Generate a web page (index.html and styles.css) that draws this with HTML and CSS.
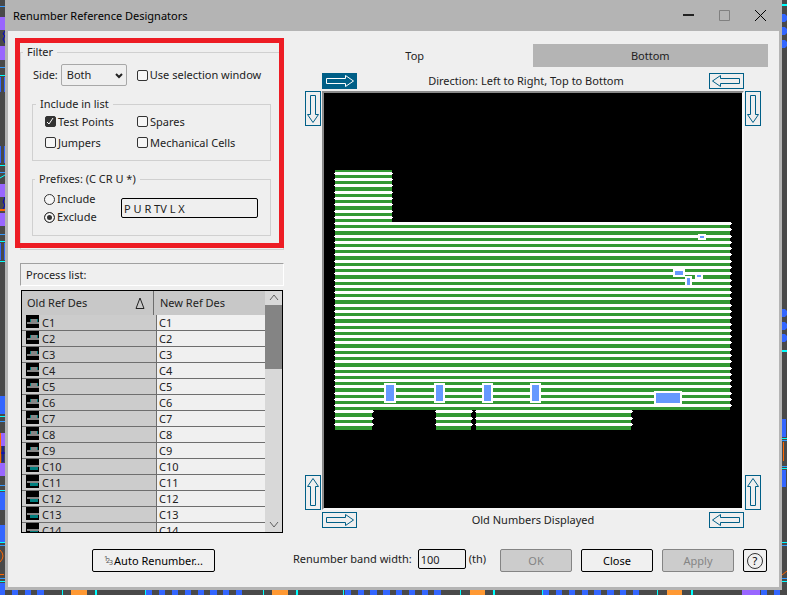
FILE: index.html
```html
<!DOCTYPE html>
<html lang="en">
<head>
  <meta charset="UTF-8">
  <meta name="viewport" content="width=device-width, initial-scale=1.0">
  <title>Renumber Reference Designators</title>
  <link rel="stylesheet" href="styles.css">
</head>
<body>
  <!-- Shared icons -->
  <svg class="defs" width="0" height="0" aria-hidden="true">
    <symbol id="arrow-right" viewBox="0 0 33 14">
      <path d="M3.5 4.5H22.5V1.5L30.5 7L22.5 12.5V9.5H3.5Z" fill="none" stroke="currentColor"/>
    </symbol>
    <symbol id="arrow-left" viewBox="0 0 33 14">
      <path d="M29.5 4.5H10.5V1.5L2.5 7L10.5 12.5V9.5H29.5Z" fill="none" stroke="currentColor"/>
    </symbol>
    <symbol id="arrow-down" viewBox="0 0 14 33">
      <path d="M4.5 3.5V22.5H1.5L7 30.5L12.5 22.5H9.5V3.5Z" fill="none" stroke="currentColor"/>
    </symbol>
    <symbol id="arrow-up" viewBox="0 0 14 33">
      <path d="M4.5 29.5V10.5H1.5L7 2.5L12.5 10.5H9.5V29.5Z" fill="none" stroke="currentColor"/>
    </symbol>
    <symbol id="part-top" viewBox="0 0 13 13">
      <rect width="13" height="13" fill="#000"/>
      <path d="M4 4h8v3h-8z" fill="#008080"/>
      <path d="M5 4h6v3h-6zM1 7h12v2H1z" fill="#868686"/>
    </symbol>
    <symbol id="part-bottom" viewBox="0 0 13 13">
      <rect width="13" height="13" fill="#000"/>
      <path d="M1 6h12v2H1z" fill="#868686"/>
      <path d="M4 8h8v3h-8z" fill="#008080"/>
    </symbol>
  </svg>

  <!-- Layout editor showing behind the dialog -->
  <svg class="backdrop" width="787" height="595" aria-hidden="true">
    <path fill="#9966ff" d="M0 17h5v13H0zM0 46h5v14H0zM0 184h5v13H0zM0 213h5v13H0zM0 433h5v13H0zM0 463h5v13H0zM742 590h18v5h-18z"/>
    <path fill="#3366ff" d="M0 77h1v15H0zM4 77h1v15H4zM0 146h1v17H0zM4 146h1v17H4zM0 243h1v17H0zM4 243h1v17H4zM0 396h5v18H0zM0 492h5v18H0zM0 525h5v17H0zM0 583h5v12H0z"/>
    <path fill="#3366ff" d="M782 14h3l2 2v4l-2 2h-3zM782 27h3l2 2v4l-2 2h-3zM782 40h3l2 2v4l-2 2h-3zM782 309h3l2 2v4l-2 2h-3zM782 322h3l2 2v4l-2 2h-3zM782 334h3l2 2v4l-2 2h-3zM782 419h4v18h-4zM782 470h4v17h-4z"/>
    <path fill="#3366ff" d="M12 590h6v5h-6zM25 590h6v5h-6zM37 590h7v5h-7zM146 590h6v5h-6zM159 590h6v5h-6zM172 590h6v5h-6zM185 590h6v5h-6zM198 590h6v5h-6zM210 590h7v5h-7zM223 590h6v5h-6zM236 590h6v5h-6zM345 590h6v5h-6zM358 590h6v5h-6zM370 590h7v5h-7zM383 590h7v5h-7zM396 590h6v5h-6zM409 590h6v5h-6zM422 590h6v5h-6zM434 590h7v5h-7zM543 590h6v5h-6zM556 590h6v5h-6zM569 590h6v5h-6zM582 590h6v5h-6zM594 590h7v5h-7zM607 590h7v5h-7zM620 590h6v5h-6zM633 590h6v5h-6zM761 590h6v5h-6zM774 590h6v5h-6z"/>
    <path fill="#3399ff" d="M0 6h5v1H0zM0 67h5v1H0zM0 172h5v1H0zM0 234h5v1H0zM0 421h5v1H0zM0 485h5v1H0zM0 545h5v1H0zM0 578h5v1H0zM782 440h5v1h-5zM782 466h5v1h-5zM782 545h5v1h-5zM782 578h5v1h-5z"/>
    <path fill="#00ffff" d="M0 75h5v1H0zM0 165h5v1H0zM0 241h5v1H0zM0 261h5v1H0zM0 416h5v1H0zM0 490h5v1H0zM0 542h5v1H0zM0 581h5v1H0zM782 4h5v2h-5zM782 350h5v2h-5zM782 438h5v1h-5zM782 468h5v1h-5zM782 542h5v1h-5zM782 581h5v1h-5zM62 590h1v5h-1zM95 590h2v5h-2zM145 590h1v5h-1zM263 590h1v5h-1zM296 590h2v5h-2zM343 590h1v5h-1zM460 590h1v5h-1zM493 590h2v5h-2zM542 590h1v5h-1zM657 590h1v5h-1zM691 590h2v5h-2z"/>
    <path fill="#ff9933" d="M71 590h16v5H71zM272 590h16v5h-16zM470 590h15v5h-15zM667 590h15v5h-15z"/>
    <path fill="#ff6600" d="M0 209h5v2H0zM0 433h1v30H0zM0 574h4v1H0zM783 442h1v19h-1z"/>
    <path fill="none" stroke="#ff6600" d="M0 550q6 6 0 12M782 575l5-4"/>
    <path fill="none" stroke="#0000cc" d="M5 31l-2 3 2 2-2 3 2 4M5 197l-2 5 2 3-2 4M1 453h4M3 446v16"/>
    <path fill="none" stroke="#00ffff" d="M0 178l5-3"/>
  </svg>

  <main class="dialog">
    <header class="titlebar">
      <h1 class="title">Renumber Reference Designators</h1>
      <div class="window-buttons">
        <button type="button" aria-label="Minimize">
          <svg width="12" height="12"><path d="M0 5h11" stroke="#222" stroke-width="2"/></svg>
        </button>
        <button type="button" aria-label="Maximize" disabled>
          <svg width="12" height="12"><path d="M.5 .5h10v10h-10z" fill="none" stroke="#808080"/></svg>
        </button>
        <button type="button" aria-label="Close window">
          <svg width="12" height="12"><path d="M0 0l11 11M11 0L0 11" stroke="#000"/></svg>
        </button>
      </div>
    </header>

    <div class="content">
      <section class="left">
        <fieldset class="group filter">
          <legend>Filter</legend>
          <div class="side-row">
            <label for="side">Side:</label>
            <div class="select">
              <select id="side">
                <option>Both</option>
                <option>Top</option>
                <option>Bottom</option>
              </select>
              <svg width="8" height="6" aria-hidden="true"><path d="M1 1l3 3 3-3" fill="none" stroke="#222" stroke-width="2"/></svg>
            </div>
            <label class="check"><input type="checkbox">Use selection window</label>
          </div>

          <fieldset class="group include">
            <legend>Include in list</legend>
            <div class="include-grid">
              <label class="check"><input type="checkbox" checked>Test Points</label>
              <label class="check"><input type="checkbox">Spares</label>
              <label class="check"><input type="checkbox">Jumpers</label>
              <label class="check"><input type="checkbox">Mechanical Cells</label>
            </div>
          </fieldset>

          <fieldset class="group prefixes">
            <legend>Prefixes: (C CR U *)</legend>
            <div class="prefix-row">
              <div class="radios">
                <label class="check"><input type="radio" name="prefix">Include</label>
                <label class="check"><input type="radio" name="prefix" checked>Exclude</label>
              </div>
              <input class="textbox prefix-input" type="text" value="P U R TV L X" aria-label="Prefixes">
            </div>
          </fieldset>
        </fieldset>

        <h2 class="process-title">Process list:</h2>
        <div class="list">
          <div class="list-view">
            <table>
              <thead>
                <tr>
                  <th class="old">Old Ref Des
                    <svg class="sort" width="10" height="12" aria-hidden="true"><path d="M5 1L1 11.5H9Z" fill="none" stroke="#222"/></svg>
                  </th>
                  <th>New Ref Des</th>
                </tr>
              </thead>
              <tbody>
                <tr><td><svg><use href="#part-top"/></svg>C1</td><td>C1</td></tr>
                <tr><td><svg><use href="#part-top"/></svg>C2</td><td>C2</td></tr>
                <tr><td><svg><use href="#part-top"/></svg>C3</td><td>C3</td></tr>
                <tr><td><svg><use href="#part-top"/></svg>C4</td><td>C4</td></tr>
                <tr><td><svg><use href="#part-top"/></svg>C5</td><td>C5</td></tr>
                <tr><td><svg><use href="#part-top"/></svg>C6</td><td>C6</td></tr>
                <tr><td><svg><use href="#part-top"/></svg>C7</td><td>C7</td></tr>
                <tr><td><svg><use href="#part-top"/></svg>C8</td><td>C8</td></tr>
                <tr><td><svg><use href="#part-top"/></svg>C9</td><td>C9</td></tr>
                <tr><td><svg><use href="#part-bottom"/></svg>C10</td><td>C10</td></tr>
                <tr><td><svg><use href="#part-bottom"/></svg>C11</td><td>C11</td></tr>
                <tr><td><svg><use href="#part-bottom"/></svg>C12</td><td>C12</td></tr>
                <tr><td><svg><use href="#part-bottom"/></svg>C13</td><td>C13</td></tr>
                <tr><td><svg><use href="#part-bottom"/></svg>C14</td><td>C14</td></tr>
              </tbody>
            </table>
          </div>
          <div class="scrollbar" aria-hidden="true">
            <svg width="10" height="14"><path d="M1 9l4-5 4 5" fill="none" stroke="#606060"/></svg>
            <div class="thumb"></div>
            <svg class="scroll-down" width="10" height="14"><path d="M1 4l4 5 4-5" fill="none" stroke="#606060"/></svg>
          </div>
        </div>
      </section>

      <section class="right">
        <div class="tabs" role="tablist">
          <button class="tab active" type="button" role="tab" aria-selected="true">Top</button>
          <button class="tab" type="button" role="tab" aria-selected="false">Bottom</button>
        </div>

        <div class="stage">
          <div class="stage-row">
            <button class="arrow selected" type="button" aria-label="Top, left to right"><svg><use href="#arrow-right"/></svg></button>
            <span class="direction">Direction: Left to Right, Top to Bottom</span>
            <button class="arrow" type="button" aria-label="Top, right to left"><svg><use href="#arrow-left"/></svg></button>
          </div>
          <div class="stage-side">
            <button class="arrow vertical" type="button" aria-label="Left, top to bottom"><svg><use href="#arrow-down"/></svg></button>
            <button class="arrow vertical" type="button" aria-label="Left, bottom to top"><svg><use href="#arrow-up"/></svg></button>
          </div>
          <div class="board">
            <svg viewBox="0 0 418 415" role="img" aria-label="Board with renumber bands">
              <path class="copper" d="M11 77h57v52H11zM11 129h395v188H11zM11 317h37v20H11zM112 317h35v20h-35zM152 317h155v20H152z"/>
              <g class="bands">
                <path d="M11 80.5h57M11 86.5h57M11 92.5h57M11 99.5h57M11 105.5h57M11 111.5h57M11 118.5h57M11 124.5h57"/>
                <path d="M11 130.5h396M11 136.5h396M11 143.5h396M11 149.5h396M11 155.5h396M11 161.5h396M11 168.5h396M11 174.5h396M11 180.5h396M11 187.5h396M11 193.5h396M11 199.5h396M11 205.5h396M11 212.5h396M11 218.5h396M11 224.5h396M11 231.5h396M11 237.5h396M11 243.5h396M11 249.5h396M11 256.5h396M11 262.5h396M11 268.5h396M11 275.5h396M11 281.5h396M11 287.5h396M11 293.5h396M11 300.5h396M11 306.5h396M11 312.5h396"/>
                <path d="M11 318.5h38M11 325.5h38M11 331.5h38M112 318.5h36M112 325.5h36M112 331.5h36M152 318.5h156M152 325.5h156M152 331.5h156"/>
              </g>
              <!-- one pixel tips at both ends of each band -->
              <path class="tips" d="M10 80.5h59M10 86.5h59M10 92.5h59M10 99.5h59M10 105.5h59M10 111.5h59M10 118.5h59M10 124.5h59M10 130.5h398M10 136.5h398M10 143.5h398M10 149.5h398M10 155.5h398M10 161.5h398M10 168.5h398M10 174.5h398M10 180.5h398M10 187.5h398M10 193.5h398M10 199.5h398M10 205.5h398M10 212.5h398M10 218.5h398M10 224.5h398M10 231.5h398M10 237.5h398M10 243.5h398M10 249.5h398M10 256.5h398M10 262.5h398M10 268.5h398M10 275.5h398M10 281.5h398M10 287.5h398M10 293.5h398M10 300.5h398M10 306.5h398M10 312.5h398M10 318.5h40M10 325.5h40M10 331.5h40M111 318.5h38M111 325.5h38M111 331.5h38M151 318.5h158M151 325.5h158M151 331.5h158"/>
              <path fill="#fff" d="M374 141h8v6h-8zM349 176h12v8h-12zM361 183h7v9h-7zM371 182h8v4h-8zM60 290h12v20H60zM110 290h11v20h-11zM158 290h11v20h-11zM206 290h11v20h-11zM330 298h28v14h-28z"/>
              <path fill="#6699ff" d="M376 143h4v2h-4zM351 178h8v4h-8zM363 185h3v7h-3zM373 182h4v2h-4zM62 292h8v16h-8zM112 292h7v16h-7zM160 292h7v16h-7zM208 292h7v16h-7zM332 300h24v10h-24z"/>
            </svg>
          </div>
          <div class="stage-side">
            <button class="arrow vertical" type="button" aria-label="Right, top to bottom"><svg><use href="#arrow-down"/></svg></button>
            <button class="arrow vertical" type="button" aria-label="Right, bottom to top"><svg><use href="#arrow-up"/></svg></button>
          </div>
          <div class="stage-row">
            <button class="arrow" type="button" aria-label="Bottom, left to right"><svg><use href="#arrow-right"/></svg></button>
            <span>Old Numbers Displayed</span>
            <button class="arrow" type="button" aria-label="Bottom, right to left"><svg><use href="#arrow-left"/></svg></button>
          </div>
        </div>
      </section>
    </div>

    <footer class="footer">
      <div class="footer-left">
        <button class="btn auto" type="button">
          <svg width="9" height="12" aria-hidden="true"><text x="0 2 5" y="6 8 10">123</text></svg>
          Auto Renumber...
        </button>
      </div>
      <div class="footer-right">
        <div class="band-width">
          <label for="band">Renumber band width:</label>
          <input class="textbox band-input" id="band" type="text" value="100">
          <span class="unit">(th)</span>
        </div>
        <button class="btn" type="button" disabled>OK</button>
        <button class="btn" type="button">Close</button>
        <button class="btn" type="button" disabled>Apply</button>
        <button class="btn help" type="button" aria-label="Help"><span>?</span></button>
      </div>
    </footer>
  </main>
</body>
</html>
```
FILE: styles.css
```css
* {
  box-sizing: border-box;
}

body {
  margin: 0;
  padding: 0 5px 5px;
  background-color: #494949;
  color: #222222;
  font-family: "Noto Sans", sans-serif;
  font-size: 11px;
  line-height: 16px;
}

button,
input,
select {
  font: inherit;
  color: inherit;
}

svg {
  display: block;
}

.defs {
  position: absolute;
}

.backdrop {
  position: absolute;
  top: 0;
  left: 0;
  z-index: -1;
}

.dialog {
  background-color: #efefef;
  border: 3px solid #b4b4b4;
  border-top: none;
}

/* Title bar */
.titlebar {
  display: flex;
  align-items: center;
  justify-content: space-between;
  height: 31px;
  padding-left: 5px;
  background-color: #b4b4b4;
  color: #000000;
}

.title {
  margin: 0;
  font-size: 11px;
  font-weight: normal;
}

.window-buttons {
  display: flex;
}

.window-buttons button {
  display: flex;
  align-items: center;
  justify-content: center;
  width: 36px;
  height: 31px;
  padding: 0;
  border: none;
  background: none;
}

.content {
  display: grid;
  grid-template-columns: 264px 1fr;
  gap: 13px;
  padding: 13px 11px 0 12px;
}

.left {
  display: flex;
  flex-direction: column;
}

/* Group boxes */
.group {
  min-width: 0;
  margin: 0;
  border: 1px solid #d0d0d0;
}

.group legend {
  height: 16px;
  margin-left: -9px;
  padding: 0 4px;
}

.filter {
  position: relative;
  padding: 4px 12px 13px 11px;
}

/* Red highlight around the filter */
.filter::after {
  content: "";
  position: absolute;
  top: -22px;
  right: -1px;
  bottom: 1px;
  left: -6px;
  border: 5px solid #ed1c24;
  pointer-events: none;
}

.side-row {
  display: flex;
  align-items: center;
  padding-left: 1px;
}

.select {
  position: relative;
  width: 66px;
  margin: 0 10px 0 3px;
}

.select select {
  display: block;
  width: 100%;
  height: 22px;
  padding: 0 5px;
  border: 1px solid #a8a8a8;
  border-radius: 2px;
  background-color: #efefef;
  appearance: none;
}

.select svg {
  position: absolute;
  top: 9px;
  right: 4px;
  pointer-events: none;
}

.include,
.prefixes {
  margin-top: 10px;
}

.include {
  padding: 0 0 8px 12px;
}

.include-grid {
  display: grid;
  grid-template-columns: 92px 1fr;
  gap: 2px 0;
}

.include-grid .check {
  height: 19px;
}

.prefixes {
  padding: 3px 12px 9px 11px;
}

.prefix-row {
  display: flex;
  align-items: center;
}

.radios {
  width: 77px;
}

.radios .check {
  height: 18px;
}

.check {
  display: flex;
  align-items: center;
  gap: 2px;
}

.check input {
  flex: none;
  width: 11px;
  height: 11px;
  margin: 0;
  border: 1px solid #333333;
  border-radius: 2px;
  background-color: #f6f6f6;
  appearance: none;
}

.check input[type="checkbox"]:checked {
  background: #333333 url("data:image/svg+xml,%3Csvg xmlns='http://www.w3.org/2000/svg' viewBox='0 0 9 9'%3E%3Cpath d='M1 5l2 2 4-6' fill='none' stroke='white'/%3E%3C/svg%3E") center / 9px no-repeat;
}

.check input[type="radio"] {
  border-radius: 50%;
}

.check input[type="radio"]:checked {
  background: #333333;
  box-shadow: inset 0 0 0 2px #f6f6f6;
}

.textbox {
  height: 20px;
  padding: 1px 2px 0;
  border: 1px solid #000000;
  border-radius: 2px;
  background-color: #efefef;
}

.prefix-input {
  flex: 1;
  min-width: 0;
}

/* Process list */
.process-title {
  height: 23px;
  margin: 13px 0 4px;
  padding: 3px 5px;
  border: 1px solid;
  border-color: #a0a0a0 #ffffff #ffffff #a0a0a0;
  font-size: 11px;
  font-weight: normal;
}

.list {
  display: flex;
  flex: 1 1 0;
  min-height: 243px;
  margin: 0 1px;
  border: 1px solid #000000;
}

.list-view {
  flex: 1;
  height: 241px;
  overflow: hidden;
}

.list table {
  width: 100%;
  border-collapse: separate;
  border-spacing: 0;
  table-layout: fixed;
}

.list th {
  position: relative;
  height: 24px;
  padding: 0 3px;
  background-color: #c8c8c8;
  font-weight: normal;
  text-align: left;
}

.list th.old {
  width: 135px;
  padding: 0 5px;
}

.list th.old::after {
  content: "";
  position: absolute;
  top: 0;
  right: 3px;
  bottom: 0;
  width: 1px;
  background-color: #6e6e6e;
}

.sort {
  position: absolute;
  top: 6px;
  right: 12px;
}

.list td {
  height: 16px;
  padding: 0 0 0 2px;
  border-bottom: 1px solid #6e6e6e;
  background-color: #f0f0f0;
  line-height: 15px;
}

.list td:first-child {
  padding-left: 4px;
  border-right: 1px solid #6e6e6e;
  background-color: #cccccc;
}

.list td svg {
  float: left;
  width: 13px;
  height: 13px;
  margin-right: 3px;
}

.scrollbar {
  display: flex;
  flex-direction: column;
  align-items: center;
  width: 17px;
  background-color: #d8d8d8;
}

.thumb {
  width: 100%;
  height: 64px;
  background-color: #848484;
}

.scroll-down {
  margin-top: auto;
}

/* Side tabs */
.tabs {
  display: flex;
}

.tab {
  flex: 1;
  height: 23px;
  padding: 0;
  border: none;
  background-color: #b4b4b4;
}

.tab.active {
  background-color: transparent;
}

.stage {
  display: grid;
  grid-template-columns: 16px 1fr 16px;
  gap: 2px 1px;
  padding: 6px 7px 0 8px;
}

.stage-row {
  grid-column: 2;
  display: flex;
  align-items: center;
  justify-content: space-between;
  height: 16px;
}

.direction {
  padding-right: 14px;
}

.stage-side {
  grid-row: 2;
  display: flex;
  flex-direction: column;
  justify-content: space-between;
}

.board {
  grid-row: 2;
  border: 2px solid;
  border-color: #8a8a8a #f7f7f7 #f7f7f7 #8a8a8a;
  background-color: #000000;
}

.board svg {
  width: 100%;
  height: auto;
}

.copper {
  fill: #339933;
}

.bands,
.tips {
  fill: none;
  stroke: #ffffff;
}

.bands {
  stroke-width: 3;
}

.arrow {
  width: 35px;
  height: 16px;
  padding: 0;
  border: 1px solid #005f87;
  background: none;
  color: #005f87;
}

.arrow svg {
  width: 100%;
  height: 100%;
}

.arrow.vertical {
  width: 16px;
  height: 35px;
}

.arrow.selected {
  background-color: #005f87;
  color: #ffffff;
}

/* Footer */
.footer {
  display: flex;
  justify-content: space-between;
  padding: 16px 12px 15px;
}

.footer-left {
  display: flex;
  justify-content: center;
  width: 267px;
}

.footer-right {
  display: flex;
  gap: 9px;
}

.band-width {
  display: flex;
  align-items: center;
  height: 20px;
  margin-right: 5px;
}

.band-input {
  width: 48px;
  margin: 0 3px 0 6px;
}

.btn {
  width: 72px;
  height: 23px;
  padding: 0;
  border: 1px solid #000000;
  border-radius: 2px;
  background-color: #f0f0f0;
  color: #000000;
}

.btn:disabled {
  border-color: #848484;
  background-color: #cccccc;
  color: #848484;
}

.btn.auto {
  display: flex;
  align-items: center;
  justify-content: center;
  gap: 1px;
  width: 123px;
}

.auto text {
  font-size: 7px;
  fill: #555555;
}

.btn.help {
  display: flex;
  align-items: center;
  justify-content: center;
  width: 24px;
}

.help span {
  width: 16px;
  height: 16px;
  border: 1px solid #333333;
  border-radius: 50%;
  line-height: 14px;
}
```
